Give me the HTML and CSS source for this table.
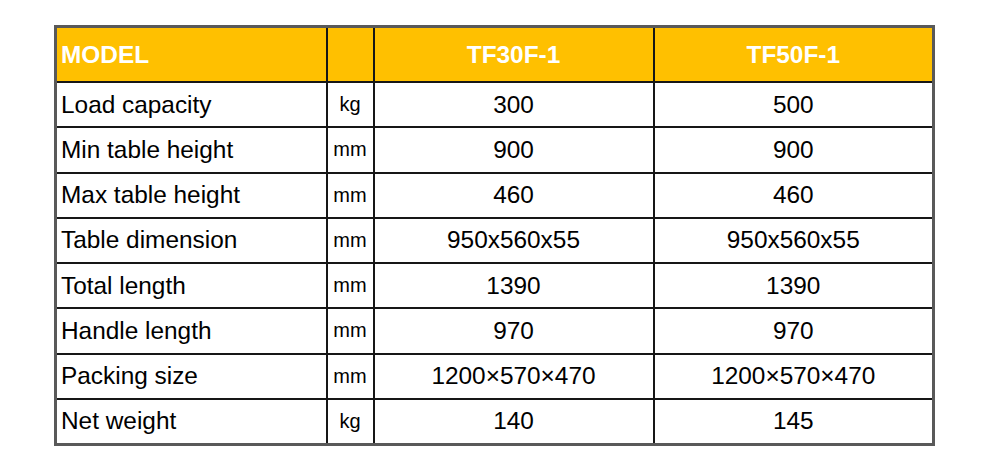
FILE: index.html
```html
<!DOCTYPE html>
<html>
<head>
<meta charset="utf-8">
<link rel="stylesheet" href="styles.css">
</head>
<body>
<table class="spec">
  <colgroup>
    <col class="c-name">
    <col class="c-unit">
    <col class="c-val">
    <col class="c-val2">
  </colgroup>
  <thead>
    <tr class="head">
      <th class="name">MODEL</th>
      <th></th>
      <th>TF30F-1</th>
      <th>TF50F-1</th>
    </tr>
  </thead>
  <tbody>
    <tr><td class="name">Load capacity</td><td class="unit">kg</td><td>300</td><td>500</td></tr>
    <tr><td class="name">Min table height</td><td class="unit">mm</td><td>900</td><td>900</td></tr>
    <tr><td class="name">Max table height</td><td class="unit">mm</td><td>460</td><td>460</td></tr>
    <tr><td class="name">Table dimension</td><td class="unit">mm</td><td>950x560x55</td><td>950x560x55</td></tr>
    <tr><td class="name">Total length</td><td class="unit">mm</td><td>1390</td><td>1390</td></tr>
    <tr><td class="name">Handle length</td><td class="unit">mm</td><td>970</td><td>970</td></tr>
    <tr><td class="name">Packing size</td><td class="unit">mm</td><td>1200×570×470</td><td>1200×570×470</td></tr>
    <tr><td class="name">Net weight</td><td class="unit">kg</td><td>140</td><td>145</td></tr>
  </tbody>
</table>
</body>
</html>
```

FILE: styles.css
```css
html, body {
  margin: 0;
  padding: 0;
  background: #ffffff;
}

body {
  padding: 25px 0 0 54px;
  font-family: "Liberation Sans", Arial, sans-serif;
  color: #000000;
}

.spec {
  border-collapse: collapse;
  table-layout: fixed;
  width: 881px;
  border: 3px solid #595959;
}

.c-name { width: 271px; }
.c-unit { width: 47px; }
.c-val { width: 280px; }
.c-val2 { width: 280px; }

.spec th,
.spec td {
  border: 2px solid #161616;
  padding: 0;
  text-align: center;
  vertical-align: middle;
  font-size: 24.4px;
  white-space: nowrap;
}

.spec .head th {
  background: #ffc000;
  color: #ffffff;
  font-weight: bold;
  height: 53px;
}

.spec tbody td {
  height: 43.25px;
}

.spec .name {
  text-align: left;
  padding-left: 4px;
}

.spec .unit {
  font-size: 20px;
}
```
